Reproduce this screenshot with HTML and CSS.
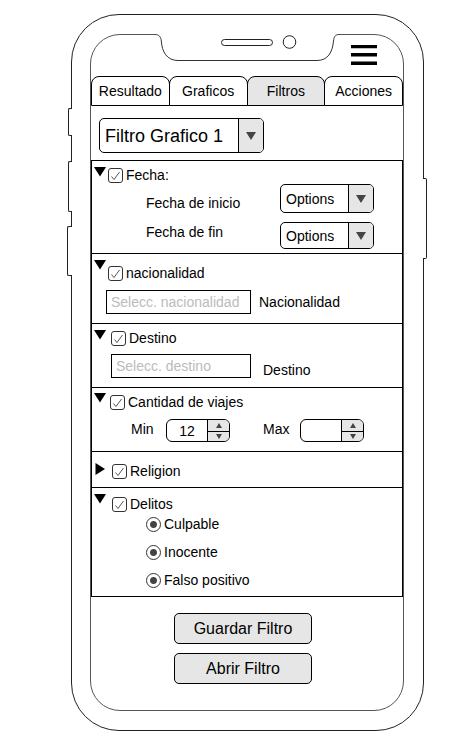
FILE: index.html
```html
<!DOCTYPE html>
<html lang="es">
<head>
<meta charset="utf-8">
<meta name="viewport" content="width=device-width, initial-scale=1">
<title>Filtros</title>
<link rel="stylesheet" href="styles.css">
</head>
<body>
<div class="phone">
  <span class="side-key side-key--mute"></span>
  <span class="side-key side-key--up"></span>
  <span class="side-key side-key--down"></span>
  <span class="side-key side-key--power"></span>

  <main class="screen">
    <svg class="notch" width="190" height="28" viewBox="0 0 190 28" aria-hidden="true">
      <rect x="3" y="0" width="184" height="1" fill="#fff"/>
      <path d="M3 .5C7 .5 9 3 9.3 7C10 18 15 26.5 26 26.5H165C176 26.5 180.500 18 181.500 7C182 3 183 .5 187 .5" fill="#fff" stroke="#333"/>
      <rect x="69.500" y="5.500" width="51" height="6" rx="3" fill="#fff" stroke="#222"/>
      <circle cx="137.500" cy="8" r="6.300" fill="#fff" stroke="#222"/>
    </svg>

    <header class="topbar">
      <button class="menu" type="button" aria-label="Menu">
        <svg width="26" height="20" viewBox="0 0 26 20"><path d="M0 1.500H26M0 9.800H26M0 18.200H26" stroke="#000" stroke-width="3.400"/></svg>
      </button>
    </header>

    <nav class="tabs">
      <button class="tab" type="button">Resultado</button>
      <button class="tab" type="button">Graficos</button>
      <button class="tab tab--active" type="button">Filtros</button>
      <button class="tab" type="button">Acciones</button>
    </nav>

    <div class="chooser">
      <div class="select select--large">
        <select aria-label="Filtro"><option>Filtro Grafico 1</option></select>
        <span class="select-arrow"><svg width="10" height="8" viewBox="0 0 10 8"><path d="M0 0H10L5 8Z" fill="#444"/></svg></span>
      </div>
    </div>

    <section class="panel panel--dates">
      <div class="panel-head">
        <button class="toggle" type="button" aria-label="Contraer" aria-expanded="true"><svg width="12" height="10" viewBox="0 0 12 10"><path d="M0 0H12L6 9.500Z"/></svg></button>
        <label class="check"><input type="checkbox" checked>Fecha:</label>
      </div>
      <div class="dates">
        <div class="date-labels">
          <label for="inicio">Fecha de inicio</label>
          <label for="fin">Fecha de fin</label>
        </div>
        <div class="date-selects">
          <div class="select">
            <select id="inicio"><option>Options</option></select>
            <span class="select-arrow"><svg width="10" height="8" viewBox="0 0 10 8"><path d="M0 0H10L5 8Z" fill="#444"/></svg></span>
          </div>
          <div class="select select--short">
            <select id="fin"><option>Options</option></select>
            <span class="select-arrow"><svg width="10" height="8" viewBox="0 0 10 8"><path d="M0 0H10L5 8Z" fill="#444"/></svg></span>
          </div>
        </div>
      </div>
    </section>

    <section class="panel">
      <div class="panel-head panel-head--roomy">
        <button class="toggle" type="button" aria-label="Contraer" aria-expanded="true"><svg width="12" height="10" viewBox="0 0 12 10"><path d="M0 0H12L6 9.500Z"/></svg></button>
        <label class="check"><input type="checkbox" checked>nacionalidad</label>
      </div>
      <div class="entry entry--nation">
        <input id="nacionalidad" type="text" placeholder="Selecc. nacionalidad">
        <label for="nacionalidad">Nacionalidad</label>
      </div>
    </section>

    <section class="panel">
      <div class="panel-head panel-head--wide">
        <button class="toggle" type="button" aria-label="Contraer" aria-expanded="true"><svg width="12" height="10" viewBox="0 0 12 10"><path d="M0 0H12L6 9.500Z"/></svg></button>
        <label class="check"><input type="checkbox" checked>Destino</label>
      </div>
      <div class="entry entry--destination">
        <input id="destino" type="text" placeholder="Selecc. destino">
        <label for="destino">Destino</label>
      </div>
    </section>

    <section class="panel">
      <div class="panel-head panel-head--trips">
        <button class="toggle" type="button" aria-label="Contraer" aria-expanded="true"><svg width="12" height="10" viewBox="0 0 12 10"><path d="M0 0H12L6 9.500Z"/></svg></button>
        <label class="check"><input type="checkbox" checked>Cantidad de viajes</label>
      </div>
      <div class="range">
        <label for="min">Min</label>
        <div class="spinner">
          <input id="min" type="number" value="12">
          <div class="spinner-keys">
            <button type="button" aria-label="Subir min"><svg width="6" height="5" viewBox="0 0 6 5"><path d="M3 0L6 5H0Z" fill="#444"/></svg></button>
            <button type="button" aria-label="Bajar min"><svg width="6" height="5" viewBox="0 0 6 5"><path d="M0 0H6L3 5Z" fill="#444"/></svg></button>
          </div>
        </div>
        <label class="range-max" for="max">Max</label>
        <div class="spinner">
          <input id="max" type="number">
          <div class="spinner-keys">
            <button type="button" aria-label="Subir max"><svg width="6" height="5" viewBox="0 0 6 5"><path d="M3 0L6 5H0Z" fill="#444"/></svg></button>
            <button type="button" aria-label="Bajar max"><svg width="6" height="5" viewBox="0 0 6 5"><path d="M0 0H6L3 5Z" fill="#444"/></svg></button>
          </div>
        </div>
      </div>
    </section>

    <section class="panel">
      <div class="panel-head panel-head--closed">
        <button class="toggle" type="button" aria-label="Expandir" aria-expanded="false"><svg width="12" height="12" viewBox="0 0 12 12"><path d="M1.500 0L11 6L1.500 12Z"/></svg></button>
        <label class="check"><input type="checkbox" checked>Religion</label>
      </div>
    </section>

    <section class="panel panel--last">
      <div class="panel-head panel-head--crimes">
        <button class="toggle" type="button" aria-label="Contraer" aria-expanded="true"><svg width="12" height="10" viewBox="0 0 12 10"><path d="M0 0H12L6 9.500Z"/></svg></button>
        <label class="check"><input type="checkbox" checked>Delitos</label>
      </div>
      <div class="verdicts">
        <label class="check"><input type="radio" name="culpable" checked>Culpable</label>
        <label class="check"><input type="radio" name="inocente" checked>Inocente</label>
        <label class="check"><input type="radio" name="falso-positivo" checked>Falso positivo</label>
      </div>
    </section>

    <div class="actions">
      <button class="action" type="button">Guardar Filtro</button>
      <button class="action" type="button">Abrir Filtro</button>
    </div>
  </main>
</div>
</body>
</html>
```
FILE: styles.css
```css
* {
  box-sizing: border-box;
}

body {
  margin: 0;
  padding: 14px 50px 17px 71px;
  background: #fff;
  color: #000;
  font: 14px/16px "Liberation Sans", Arial, sans-serif;
}

button,
input,
select {
  margin: 0;
  padding: 0;
  border: 0;
  background: none;
  color: inherit;
  font: inherit;
}

svg {
  display: block;
}

/* Device outline */
.phone {
  position: relative;
  padding: 19px 19px 19px 18px;
  border: 1px solid #222;
  border-radius: 48px;
}

.side-key {
  position: absolute;
  left: -4px;
  width: 4px;
  border: 1px solid #222;
  border-right: 0;
  border-radius: 2px 0 0 2px;
  background: #fff;
}

.side-key--mute {
  top: 93px;
  height: 28px;
}

.side-key--up {
  top: 146px;
  height: 51px;
}

.side-key--down {
  top: 211px;
  left: -5px;
  width: 5px;
  height: 50px;
}

.side-key--power {
  top: 163px;
  right: -4px;
  left: auto;
  height: 81px;
  border: 1px solid #222;
  border-left: 0;
  border-radius: 0 2px 2px 0;
}

.screen {
  position: relative;
  border: 1px solid #555;
  border-radius: 30px;
}

.notch {
  position: absolute;
  top: -1px;
  left: 50%;
  transform: translateX(-50%);
}

.topbar {
  display: flex;
  justify-content: flex-end;
  align-items: flex-start;
  height: 41px;
  padding: 10px 26px 0;
}

/* Tabs */
.tabs {
  display: flex;
}

.tab {
  flex: 1;
  height: 30px;
  border: 1px solid #000;
  border-radius: 8px 8px 0 0;
  background: #fff;
}

.tab + .tab {
  margin-left: -1px;
}

.tab--active {
  background: #e6e6e6;
}

/* Drop-downs */
.chooser {
  padding: 12px 8px 7px;
}

.select {
  display: flex;
  width: 94px;
  height: 29px;
  border: 1px solid #000;
  border-radius: 5px;
  overflow: hidden;
}

.select select {
  flex: 1;
  min-width: 0;
  padding-left: 5px;
  appearance: none;
}

.select-arrow {
  display: flex;
  align-items: center;
  justify-content: center;
  width: 25px;
  border-left: 1px solid #000;
  background: #e6e6e6;
}

.select--short {
  height: 27px;
}

.select--large {
  width: 165px;
  height: 35px;
  font-size: 18px;
  line-height: 20px;
}

/* Filter panels */
.panel {
  padding-bottom: 9px;
  border: 1px solid #000;
  border-bottom: 0;
}

.panel--dates {
  padding-bottom: 4px;
}

.panel--last {
  padding-bottom: 8px;
  border-bottom: 1px solid #000;
}

.panel-head {
  display: flex;
  align-items: flex-start;
  gap: 2px;
  padding: 6px 2px 0;
}

.panel-head--roomy .check {
  margin-top: 5px;
}

.panel-head--wide {
  gap: 5px;
}

.panel-head--trips {
  gap: 4px;
  padding-top: 5px;
}

.panel-head--trips .check {
  margin-top: 1px;
}

.panel-head--closed {
  gap: 6px;
  margin-bottom: -1px;
  padding-top: 11px;
}

.panel-head--crimes {
  gap: 6px;
}

.panel-head--crimes .check {
  margin-top: 2px;
}

.check {
  display: flex;
  align-items: center;
  gap: 3px;
}

.check input {
  width: 15px;
  height: 15px;
  border: 1px solid #333;
  border-radius: 3px;
  appearance: none;
}

.check input[type="checkbox"]:checked {
  background: url("data:image/svg+xml,%3Csvg xmlns='http://www.w3.org/2000/svg' viewBox='0 0 13 13'%3E%3Cpath d='M2.500 7.500L5 10.500L10.500 3' fill='none' stroke='%23555'/%3E%3C/svg%3E") center / 13px 13px no-repeat;
}

.check input[type="radio"] {
  border-radius: 50%;
}

.check input[type="radio"]:checked {
  background: radial-gradient(circle, #444 3px, transparent 4px);
}

.dates {
  display: flex;
  justify-content: space-between;
  padding: 1px 28px 0 54px;
}

.date-labels {
  display: grid;
  align-content: start;
  gap: 13px;
  padding-top: 11px;
}

.date-selects {
  display: grid;
  gap: 9px;
}

.entry {
  display: flex;
}

.entry input {
  height: 24px;
  padding: 0 4px;
  border: 1px solid #000;
}

.entry input::placeholder {
  color: #bbb;
  opacity: 1;
}

.entry--nation {
  align-items: center;
  gap: 8px;
  padding: 9px 14px 0;
}

.entry--nation input {
  width: 145px;
}

.entry--destination {
  align-items: flex-end;
  gap: 12px;
  padding: 8px 19px 0;
}

.entry--destination input {
  width: 140px;
}

.range {
  display: flex;
  align-items: flex-start;
  padding: 9px 38px 0 39px;
}

.range label {
  width: 35px;
  padding-top: 2px;
}

.range .range-max {
  width: 37px;
  margin-left: 33px;
}

.spinner {
  display: flex;
  width: 64px;
  height: 23px;
  border: 1px solid #000;
  border-radius: 6px;
  overflow: hidden;
}

.spinner input {
  flex: 1;
  min-width: 0;
  text-align: center;
  appearance: textfield;
}

.spinner input::-webkit-inner-spin-button {
  appearance: none;
}

.spinner-keys {
  display: grid;
  grid-template-rows: 1fr 1fr;
  width: 22px;
  border-left: 1px solid #000;
  background: #e6e6e6;
}

.spinner-keys button {
  display: flex;
  align-items: center;
  justify-content: center;
}

.spinner-keys button + button {
  border-top: 1px solid #000;
}

.verdicts {
  display: grid;
  justify-items: start;
  gap: 12px;
  padding: 4px 54px 0;
}

/* Bottom buttons */
.actions {
  display: grid;
  justify-content: center;
  gap: 9px;
  padding: 16px 8px 26px 0;
}

.action {
  width: 138px;
  height: 31px;
  border: 1px solid #000;
  border-radius: 5px;
  background: #e6e6e6;
  font-size: 16px;
}
```
